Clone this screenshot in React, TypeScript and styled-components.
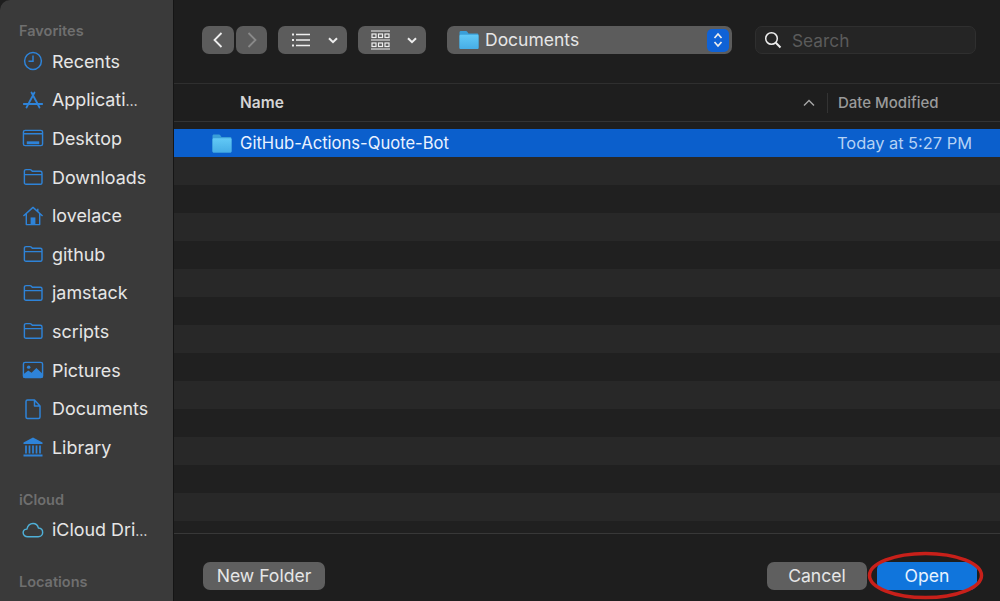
import React from "react";
import styled, { createGlobalStyle } from "styled-components";

const Global = createGlobalStyle`
  html, body { margin: 0; padding: 0; background: #1e1e1e; overflow: hidden; }
  #root { width: 1000px; height: 601px; }
`;

const Blue = "#2e83d8";

const Window = styled.div`
  position: relative;
  width: 1000px;
  height: 601px;
  display: flex;
  overflow: hidden;
  background: #1e1e1e;
  font-family: Inter, "Noto Sans", "Liberation Sans", sans-serif;
`;

const Sidebar = styled.aside`
  width: 174px;
  height: 601px;
  flex: none;
  box-sizing: border-box;
  padding: 21px 0 0 0;
  background: #3a3a3a;
  border-right: 1px solid #151515;
  border-top-left-radius: 10px;
  overflow: hidden;
`;

const SectionLabel = styled.div<{ $gap?: number }>`
  height: 20px;
  line-height: 20px;
  margin: ${(p) => p.$gap ?? 0}px 0 0 19px;
  font-size: 14.5px;
  font-weight: 600;
  color: #6f6f6f;
`;

const SideList = styled.div<{ $mt?: number }>`
  display: flex;
  flex-direction: column;
  margin-top: ${(p) => p.$mt ?? 0}px;
`;

const SideRow = styled.div`
  height: 38.6px;
  display: flex;
  align-items: center;
  padding-left: 22px;
  gap: 8px;
`;

const SideIcon = styled.svg<{ $tint?: string }>`
  width: 22px;
  height: 22px;
  flex: none;
  fill: none;
  stroke: ${(p) => p.$tint ?? Blue};
  stroke-width: 1.5;
`;

const SideText = styled.span`
  font-size: 17.9px;
  font-weight: 400;
  color: #e6e6e6;
  white-space: nowrap;
`;

const Dots = styled.span`
  font-size: 14px;
`;

const Main = styled.main`
  flex: 1;
  display: flex;
  flex-direction: column;
  min-width: 0;
`;

const Toolbar = styled.div`
  height: 84px;
  flex: none;
  box-sizing: border-box;
  padding: 26px 0 0 28px;
  display: flex;
  align-items: flex-start;
  border-bottom: 1px solid #2f2f2f;
`;

const ToolGroup = styled.div<{ $ml?: number }>`
  display: flex;
  gap: 2px;
  margin-left: ${(p) => p.$ml ?? 0}px;
`;

const NavButton = styled.div<{ $w: number }>`
  width: ${(p) => p.$w}px;
  height: 28px;
  border-radius: 7px;
  background: #5c5c5c;
  display: flex;
  align-items: center;
  justify-content: center;
`;

const MenuButton = styled.div<{ $w: number; $pl: number; $gap: number }>`
  width: ${(p) => p.$w}px;
  height: 28px;
  box-sizing: border-box;
  padding-left: ${(p) => p.$pl}px;
  border-radius: 7px;
  background: #5c5c5c;
  display: flex;
  align-items: center;
  gap: ${(p) => p.$gap}px;
`;

const ToolIcon = styled.svg<{ $tint?: string }>`
  flex: none;
  fill: none;
  stroke: ${(p) => p.$tint ?? "#eeeeee"};
  stroke-width: 1.6;
`;

const PathPopup = styled.div`
  width: 285px;
  height: 28px;
  margin-left: 21px;
  box-sizing: border-box;
  padding: 0 3px 0 12px;
  border-radius: 7px;
  background: #5c5c5c;
  display: flex;
  align-items: center;
  gap: 6px;
`;

const PathText = styled.span`
  flex: 1;
  padding-bottom: 2px;
  font-size: 17.5px;
  color: #e6e6e6;
`;

const Stepper = styled.div`
  width: 22px;
  height: 23px;
  border-radius: 5px;
  background: #0f62d6;
  display: flex;
  align-items: center;
  justify-content: center;
`;

const SearchBox = styled.div`
  width: 221px;
  height: 28px;
  margin-left: 23px;
  box-sizing: border-box;
  padding: 0 0 0 8px;
  border-radius: 7px;
  background: #252525;
  border: 1px solid #2f2f2f;
  display: flex;
  align-items: center;
  gap: 10px;
`;

const SearchText = styled.span`
  font-size: 17.3px;
  color: #5b5b5b;
`;

const Header = styled.div`
  height: 38px;
  flex: none;
  box-sizing: border-box;
  display: flex;
  align-items: center;
  border-bottom: 1px solid #333333;
`;

const HeaderName = styled.div`
  flex: 1;
  padding-left: 66px;
  font-size: 15.5px;
  font-weight: 600;
  color: #d4d4d4;
`;

const SortIcon = styled.svg`
  flex: none;
  margin-right: 12px;
  fill: none;
  stroke: #a8a8a8;
  stroke-width: 1.4;
`;

const HeaderDate = styled.div`
  width: 173px;
  box-sizing: border-box;
  padding-left: 10px;
  height: 20px;
  line-height: 20px;
  border-left: 1px solid #333333;
  font-size: 15px;
  font-weight: 500;
  color: #9a9a9a;
`;

const Rows = styled.div`
  flex: 1;
  padding-top: 7px;
  display: flex;
  flex-direction: column;
  overflow: hidden;
`;

const Row = styled.div<{ $selected?: boolean; $alt?: boolean }>`
  height: 28px;
  flex: none;
  display: flex;
  align-items: center;
  background: ${(p) => (p.$selected ? "#0b5fcc" : p.$alt ? "#282828" : "#202020")};
`;

const RowName = styled.div`
  flex: 1;
  display: flex;
  align-items: center;
  gap: 8px;
  padding-left: 38px;
  font-size: 16.6px;
  color: #eaf2ff;
`;

const RowDate = styled.div`
  width: 163px;
  font-size: 16.4px;
  color: #b5d2f5;
`;

const Footer = styled.div`
  height: 68px;
  flex: none;
  box-sizing: border-box;
  padding: 28px 23px 0 29px;
  display: flex;
  align-items: flex-start;
  border-top: 1px solid #383838;
`;

const FootButton = styled.div<{ $w: number; $primary?: boolean; $ml?: number }>`
  width: ${(p) => p.$w}px;
  height: 28px;
  box-sizing: border-box;
  padding-bottom: 2px;
  margin-left: ${(p) => p.$ml ?? 0}px;
  border-radius: 7px;
  display: flex;
  align-items: center;
  justify-content: center;
  font-size: 17.6px;
  color: ${(p) => (p.$primary ? "#e8f2ff" : "#e6e6e6")};
  background: ${(p) => (p.$primary ? "#1075dc" : "#5f5f5f")};
`;

const FootSpacer = styled.div`
  flex: 1;
`;

const Annotation = styled.svg`
  position: absolute;
  left: 866px;
  top: 549px;
  width: 120px;
  height: 52px;
  fill: none;
  stroke: #c8201a;
  stroke-width: 3.5;
  pointer-events: none;
`;

const FolderPath = "M2.5 5.5c0-1 .7-1.7 1.7-1.7h4.2c.6 0 1 .2 1.4.6l1 1.1h8.4c1 0 1.7.7 1.7 1.7v10.2c0 1-.7 1.7-1.7 1.7H4.2c-1 0-1.700-.7-1.700-1.700V5.500zM2.500 9h18.400";

const Folder = () => (
  <SideIcon viewBox="0 0 23 23"><path d={FolderPath} /></SideIcon>
);

const ColorFolder = ({ id, w, h }: { id: string; w: number; h: number }) => (
  <svg width={w} height={h} viewBox="0 0 20 19">
    <defs>
      <linearGradient id={id} x1="0" y1="0" x2="0" y2="1">
        <stop offset="0" stopColor="#62c9f6" />
        <stop offset="1" stopColor="#46ade6" />
      </linearGradient>
    </defs>
    <path d="M0.5 2C.5 1 1 .5 2 .5h5c.6 0 1 .3 1.3.7L9.5 3H18c1 0 1.5.5 1.5 1.5V17c0 1-.5 1.5-1.5 1.5H2C1 18.5.5 18 .5 17V2z" fill="#3a9fd8" />
    <path d="M.5 5.5C.5 4.7 1 4.200 2 4.200h16c1 0 1.500.5 1.500 1.300V17c0 1-.5 1.500-1.500 1.500H2C1 18.500.5 18 .5 17V5.500z" fill={`url(#${id})`} />
  </svg>
);

const items: { label: string; dots?: boolean; icon: React.ReactNode }[] = [
  {
    label: "Recents",
    icon: (
      <SideIcon viewBox="0 0 22 22">
        <circle cx="11" cy="11" r="8.4" />
        <path d="M11 5.500V11.300H6.500" />
      </SideIcon>
    ),
  },
  {
    label: "Applicati",
    dots: true,
    icon: (
      <SideIcon viewBox="0 0 22 22" strokeLinecap="round">
        <path d="M9.500 3.500L17.500 18.500M12.500 3.500L4.500 18.500M1.800 15h18.400" strokeWidth="1.800" />
      </SideIcon>
    ),
  },
  {
    label: "Desktop",
    icon: (
      <SideIcon viewBox="0 0 23 23">
        <rect x="1.500" y="3.500" width="20" height="16" rx="1.800" />
        <path d="M1.500 7h20" />
        <rect x="5" y="15" width="13" height="3" fill={Blue} stroke="none" />
      </SideIcon>
    ),
  },
  { label: "Downloads", icon: <Folder /> },
  {
    label: "lovelace",
    icon: (
      <SideIcon viewBox="0 0 23 23" strokeLinejoin="round">
        <path d="M1.500 11.500L11.500 2.500l10 9M4.500 9.500V20.500h14V9.500M16.500 4v3" />
        <rect x="9" y="13" width="5" height="7.500" fill={Blue} stroke="none" />
      </SideIcon>
    ),
  },
  { label: "github", icon: <Folder /> },
  { label: "jamstack", icon: <Folder /> },
  { label: "scripts", icon: <Folder /> },
  {
    label: "Pictures",
    icon: (
      <SideIcon viewBox="0 0 23 23">
        <rect x="1.500" y="3.500" width="20" height="16" rx="1.800" />
        <circle cx="7" cy="8.500" r="1.800" fill={Blue} stroke="none" />
        <path d="M1.500 19.500V16l5-4 3.500 2.500 5-5 6.500 6v4z" fill={Blue} stroke="none" />
      </SideIcon>
    ),
  },
  {
    label: "Documents",
    icon: (
      <SideIcon viewBox="0 0 22 22" strokeLinejoin="round">
        <path d="M4 3.500C4 2.600 4.600 2 5.500 2h7L18 8v11c0 .9-.6 1.500-1.500 1.500h-11C4.600 20.500 4 19.900 4 19V3.500zM12.500 2v6H18" />
      </SideIcon>
    ),
  },
  {
    label: "Library",
    icon: (
      <SideIcon viewBox="0 0 22 22">
        <path d="M11 1.500L20.500 6.500V8H1.500V6.500z" fill={Blue} stroke="none" />
        <path d="M4 9.500v8M7.500 9.500v8M11 9.500v8M14.500 9.500v8M18 9.500v8" strokeWidth="1.700" />
        <path d="M1.500 19.500h19" strokeWidth="2" />
      </SideIcon>
    ),
  },
];

const emptyRows = Array.from({ length: 14 }, (_, i) => i);
const gridCells = [1.5, 8, 14.5];

export default function App() {
  return (
    <Window>
      <Global />
      <Sidebar>
        <SectionLabel>Favorites</SectionLabel>
        <SideList $mt={1}>
          {items.map((it) => (
            <SideRow key={it.label}>
              {it.icon}
              <SideText>{it.label}{it.dots && <Dots>…</Dots>}</SideText>
            </SideRow>
          ))}
        </SideList>
        <SectionLabel $gap={23}>iCloud</SectionLabel>
        <SideList $mt={1}>
          <SideRow>
            <SideIcon viewBox="0 0 23 23" $tint="#4fb0d8">
              <path d="M6 18.500c-2.800 0-4.800-1.700-4.800-4 0-2.200 1.700-3.800 3.900-3.900C6 7 8.600 4.800 11.500 4.800c3 0 5 2 5.700 4.700 2.600.2 4.400 2 4.400 4.500s-2 4.500-4.700 4.500H6z" />
            </SideIcon>
            <SideText>iCloud Dri<Dots>…</Dots></SideText>
          </SideRow>
        </SideList>
        <SectionLabel $gap={23}>Locations</SectionLabel>
      </Sidebar>
      <Main>
        <Toolbar>
          <ToolGroup>
            <NavButton $w={32}>
              <ToolIcon width="12" height="18" viewBox="0 0 12 18"><path d="M9.500 2L2.500 9l7 7" strokeWidth="1.800" /></ToolIcon>
            </NavButton>
            <NavButton $w={31}>
              <ToolIcon width="12" height="18" viewBox="0 0 12 18" $tint="#8a8a8a"><path d="M2.500 2l7 7-7 7" strokeWidth="1.800" /></ToolIcon>
            </NavButton>
          </ToolGroup>
          <ToolGroup $ml={11}>
            <MenuButton $w={69} $pl={14} $gap={18}>
              <ToolIcon width="18" height="14" viewBox="0 0 18 14">
                <path d="M4 1.500H18M4 7H18M4 12.500H18" />
                <path d="M0 1.500H2M0 7H2M0 12.500H2" strokeWidth="2" />
              </ToolIcon>
              <ToolIcon width="10" height="7" viewBox="0 0 10 7"><path d="M1 1.200L5 5.200l4-4" strokeWidth="2" /></ToolIcon>
            </MenuButton>
          </ToolGroup>
          <ToolGroup $ml={11}>
            <MenuButton $w={68} $pl={13} $gap={17}>
              <ToolIcon width="19" height="20" viewBox="0 0 19 20">
                <path d="M0 1H19M0 10H19M0 19H19" strokeWidth="1" />
                {gridCells.map((x) => (
                  <rect key={x} x={x - 0.5} y="4" width="4" height="3.500" strokeWidth="1.200" />
                ))}
                {gridCells.map((x) => (
                  <rect key={x} x={x - 0.5} y="13" width="4" height="3.500" strokeWidth="1.200" />
                ))}
              </ToolIcon>
              <ToolIcon width="10" height="7" viewBox="0 0 10 7"><path d="M1 1.200L5 5.200l4-4" strokeWidth="2" /></ToolIcon>
            </MenuButton>
          </ToolGroup>
          <PathPopup>
            <ColorFolder id="pathFolder" w={20} h={20} />
            <PathText>Documents</PathText>
            <Stepper>
              <ToolIcon width="12" height="18" viewBox="0 0 12 18">
                <path d="M2.500 7L6 3l3.500 4M2.500 11L6 15l3.500-4" strokeWidth="1.700" />
              </ToolIcon>
            </Stepper>
          </PathPopup>
          <SearchBox>
            <ToolIcon width="18" height="18" viewBox="0 0 18 18">
              <circle cx="7.500" cy="7.500" r="5.800" strokeWidth="1.500" />
              <path d="M11.800 11.800L16.500 16.500" strokeWidth="2" />
            </ToolIcon>
            <SearchText>Search</SearchText>
          </SearchBox>
        </Toolbar>
        <Header>
          <HeaderName>Name</HeaderName>
          <SortIcon width="12" height="8" viewBox="0 0 12 8"><path d="M1 6.500L6 1.500l5 5" /></SortIcon>
          <HeaderDate>Date Modified</HeaderDate>
        </Header>
        <Rows>
          <Row $selected>
            <RowName>
              <ColorFolder id="rowFolder" w={20} h={19} />
              GitHub-Actions-Quote-Bot
            </RowName>
            <RowDate>Today at 5:27 PM</RowDate>
          </Row>
          {emptyRows.map((i) => (
            <Row key={i} $alt={i % 2 === 0} />
          ))}
        </Rows>
        <Footer>
          <FootButton $w={122}>New Folder</FootButton>
          <FootSpacer />
          <FootButton $w={100}>Cancel</FootButton>
          <FootButton $w={100} $ml={10} $primary>Open</FootButton>
        </Footer>
      </Main>
      <Annotation viewBox="0 0 120 52">
        <ellipse cx="59.500" cy="26.500" rx="56" ry="22" />
      </Annotation>
    </Window>
  );
}
